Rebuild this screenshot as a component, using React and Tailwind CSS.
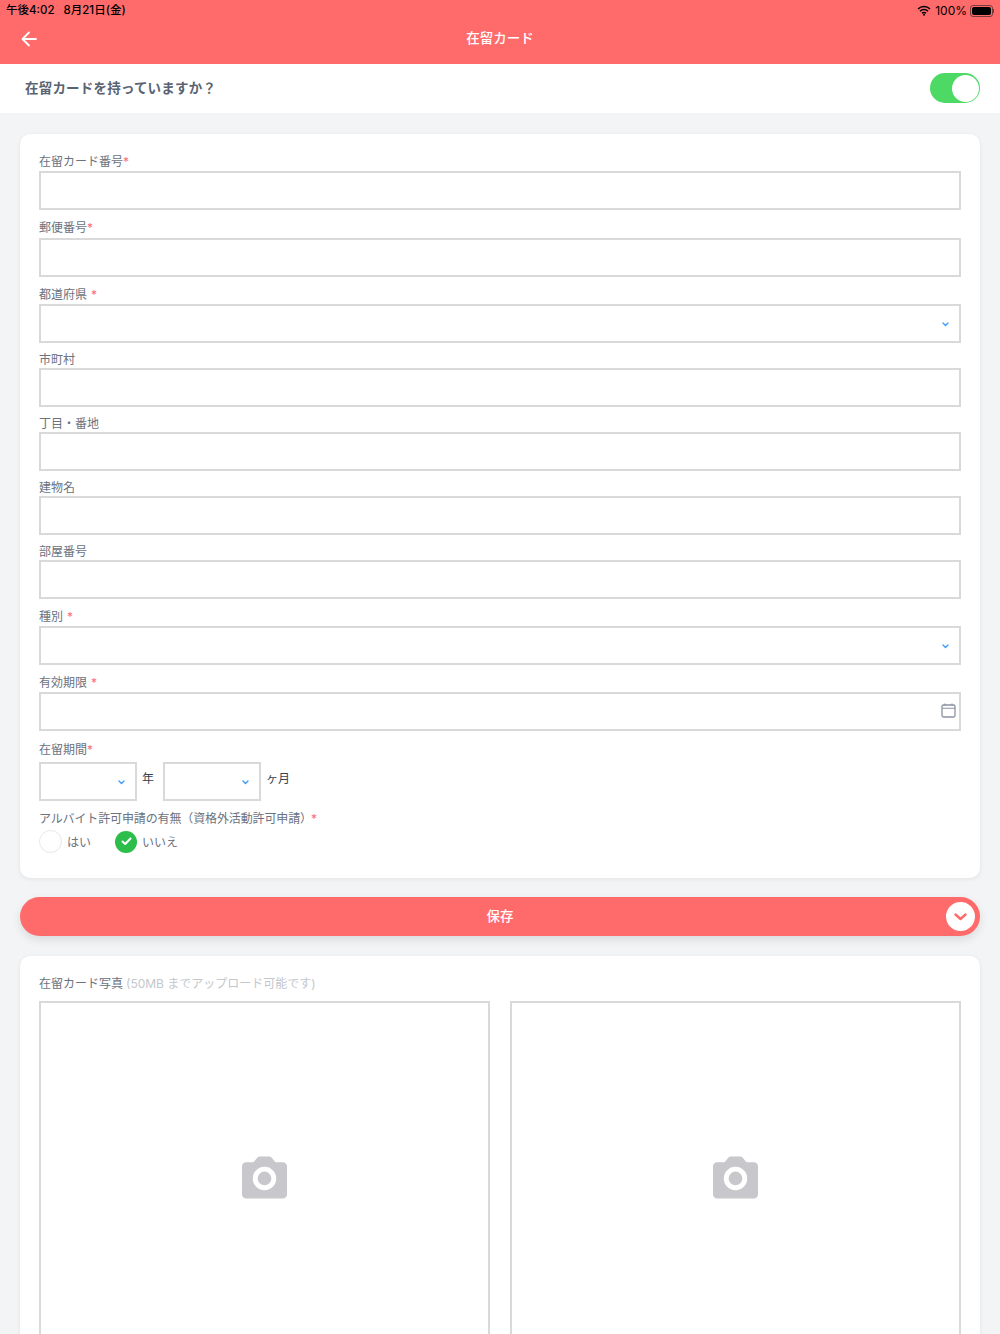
function Chevron({ className = "" }) {
  return (
    <svg className={className} width="7" height="5" viewBox="0 0 7 5" fill="none">
      <path d="M1 1l2.5 2.5L6 1" stroke="#3b9eff" strokeWidth="1.4" strokeLinecap="round" strokeLinejoin="round" />
    </svg>
  );
}

function Label({ text, star, gap, h }) {
  return (
    <div className={`flex items-end text-[12px] leading-[16px] text-[#6b7280] ${h}`}>
      <span>{text}</span>
      {star && <span className={`text-[#ff6b6b] ${gap}`}>*</span>}
    </div>
  );
}

function Box({ select, date }) {
  return (
    <div className="flex h-[39px] w-full items-center justify-end border-2 border-[#d9d9dc] bg-white pr-[10px]">
      {select && <Chevron className="mt-[2px]" />}
      {date && (
        <svg className="mr-[-7px] mb-[2px]" width="15" height="15" viewBox="0 0 15 15" fill="none">
          <rect x="1" y="2" width="13" height="12" rx="1.5" stroke="#8a92a3" strokeWidth="1.3" />
          <path d="M1 5.3h13M4 .5v2M11 .5v2" stroke="#8a92a3" strokeWidth="1.1" />
        </svg>
      )}
    </div>
  );
}

function Field({ text, star, gap = "", h, select, date }) {
  return (
    <div className="flex flex-col">
      <Label text={text} star={star} gap={gap} h={h} />
      <Box select={select} date={date} />
    </div>
  );
}

function Camera() {
  return (
    <svg width="45" height="44" viewBox="0 0 46 44" fill="none">
      <path
        d="M4 7h6.500c1 0 1.800-.5 2.400-1.300l2-2.700C16 1.600 17.300 1 18.500 1h9c1.300 0 2.500.6 3.600 2l2 2.700c.6.8 1.400 1.300 2.400 1.300H42c2.200 0 4 1.800 4 4v29c0 2.200-1.800 4-4 4H4c-2.200 0-4-1.800-4-4V11c0-2.200 1.800-4 4-4z"
        fill="#c8c8cc"
      />
      <circle cx="23" cy="23.500" r="9.500" fill="#c8c8cc" stroke="#ffffff" strokeWidth="5" />
    </svg>
  );
}

function PhotoBox() {
  return (
    <div className="flex h-[420px] flex-1 items-start justify-center border-2 border-[#d9d9dc] bg-white pt-[152px]">
      <Camera />
    </div>
  );
}

export default function App() {
  return (
    <div
      className="flex h-[1334px] w-[1000px] flex-col overflow-hidden bg-[#f3f4f6]"
      style={{ fontFamily: '"Inter", "Noto Sans CJK JP", sans-serif' }}
    >
      <header className="flex h-[64px] shrink-0 flex-col bg-[#ff6b6b] pl-[6px] pr-[6px]">
        <div className="flex h-[20px] items-center justify-between pt-[1px] text-[11.5px] font-medium text-black">
          <div className="flex items-center gap-[9px]">
            <span>午後4:02</span>
            <span>8月21日(金)</span>
          </div>
          <div className="flex items-center gap-[3px]">
            <svg className="mr-[1px]" width="14" height="11" viewBox="0 0 14 11" fill="none">
              <path d="M1 4a8.500 8.500 0 0 1 12 0M3 6.200a5.600 5.600 0 0 1 8 0M5 8.300a2.800 2.800 0 0 1 4 0" stroke="#000" strokeWidth="1.500" />
              <circle cx="7" cy="9.700" r="1" fill="#000" />
            </svg>
            <span className="text-[12px] font-normal">100%</span>
            <div className="flex items-center">
              <div className="h-[12px] w-[23px] rounded-[3px] border border-[#7a3a3a] p-[1px]">
                <div className="h-full w-full rounded-[2px] bg-black" />
              </div>
              <div className="h-[4px] w-[1px] bg-[#7a3a3a]" />
            </div>
          </div>
        </div>
        <div className="relative flex h-[38px] items-center justify-center">
          <svg className="absolute left-[15px] top-[11px]" width="16" height="16" viewBox="0 0 16 16" fill="none">
            <path d="M15 8H1.500M8 1.500L1.500 8 8 14.500" stroke="#ffffff" strokeWidth="1.800" strokeLinecap="round" strokeLinejoin="round" />
          </svg>
          <span className="text-[13.500px] font-medium leading-none text-white">在留カード</span>
        </div>
      </header>

      <div className="flex h-[49px] shrink-0 items-center justify-between bg-white pb-[1px] pl-[25px] pr-[20px]">
        <span className="text-[13.500px] font-semibold tracking-[0.2px] text-[#5a6372]">在留カードを持っていますか？</span>
        <div className="flex h-[30px] w-[50px] items-center justify-end rounded-full bg-[#4cd964] p-[1.500px]">
          <div className="h-[27px] w-[27px] rounded-full bg-white" />
        </div>
      </div>

      <main className="flex flex-col px-[20px] pt-[21px]">
        <section className="flex h-[744px] flex-col rounded-[10px] bg-white px-[19px] shadow-[0_1px_4px_rgba(0,0,0,0.08)]">
          <Field text="在留カード番号" star h="h-[37px] pb-[1px]" />
          <Field text="郵便番号" star h="h-[27.500px] pb-[2px]" />
          <Field text="都道府県" star gap="ml-[4px]" h="h-[27.500px] pb-[1px]" select />
          <Field text="市町村" h="h-[25px]" />
          <Field text="丁目・番地" h="h-[25px]" />
          <Field text="建物名" h="h-[25px]" />
          <Field text="部屋番号" h="h-[25px]" />
          <Field text="種別" star gap="ml-[4px]" h="h-[27px] pb-[1px]" select />
          <Field text="有効期限" star gap="ml-[4px]" h="h-[27px] pb-[1px]" date />

          <Label text="在留期間" star h="h-[31px] pb-[4px]" />
          <div className="flex items-center">
            <div className="flex h-[39px] w-[98px] items-center justify-end border-2 border-[#d9d9dc] pr-[10px]">
              <Chevron className="mt-[2px]" />
            </div>
            <span className="ml-[5px] w-[22px] pb-[6px] text-[12px] text-[#374151]">年</span>
            <div className="-ml-[1px] flex h-[39px] w-[98px] items-center justify-end border-2 border-[#d9d9dc] pr-[10px]">
              <Chevron className="mt-[2px]" />
            </div>
            <span className="ml-[5px] pb-[6px] text-[12px] text-[#374151]">ヶ月</span>
          </div>

          <div className="mt-[10px] flex h-[16px] items-center text-[12px] tracking-[-0.13px] text-[#6b7280]">
            アルバイト許可申請の有無（資格外活動許可申請）
            <span className="ml-[-1px] text-[#ff6b6b]">*</span>
          </div>
          <div className="mt-[3px] flex items-center text-[12px] text-[#6b7280]">
            <div className="h-[23px] w-[23px] rounded-full border border-[#e5e7eb] bg-white" />
            <span className="ml-[5px] w-[48px] pt-[2px]">はい</span>
            <div className="flex h-[22px] w-[22px] items-center justify-center rounded-full bg-[#2dbd4a]">
              <svg width="11" height="9" viewBox="0 0 11 9" fill="none">
                <path d="M1.500 4.500L4.200 7 9.500 1.500" stroke="#ffffff" strokeWidth="2" strokeLinecap="round" strokeLinejoin="round" />
              </svg>
            </div>
            <span className="ml-[5px] pt-[2px]">いいえ</span>
          </div>
        </section>

        <button className="relative mt-[19px] flex h-[39px] items-center justify-center rounded-full bg-[#ff6b6b] text-[13.500px] font-medium text-white shadow-[0_4px_10px_rgba(0,0,0,0.1)]">
          保存
          <span className="absolute right-[5px] top-[5px] flex h-[29px] w-[29px] items-center justify-center rounded-full bg-white">
            <svg width="13" height="8" viewBox="0 0 13 8" fill="none">
              <path d="M1.500 1.500L6.500 6l5-4.500" stroke="#ff6b6b" strokeWidth="2.400" strokeLinecap="round" strokeLinejoin="round" />
            </svg>
          </span>
        </button>

        <section className="mt-[20px] flex h-[500px] flex-col rounded-[10px] bg-white px-[19px] shadow-[0_1px_4px_rgba(0,0,0,0.08)]">
          <div className="flex h-[45px] items-end pb-[9px] text-[12px] leading-[16px]">
            <span className="text-[#6b7280]">在留カード写真</span>
            <span className="ml-[3px] text-[#c4c7cc]">(50MB までアップロード可能です)</span>
          </div>
          <div className="flex gap-[20px]">
            <PhotoBox />
            <PhotoBox />
          </div>
        </section>
      </main>
    </div>
  );
}
